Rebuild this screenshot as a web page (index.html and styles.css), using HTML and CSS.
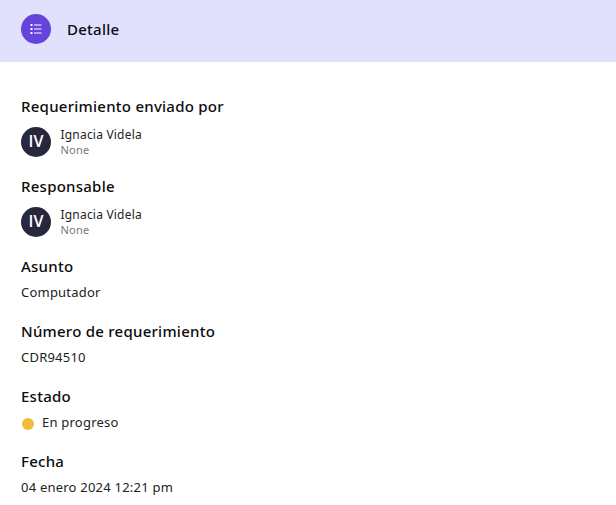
FILE: index.html
```html
<!DOCTYPE html>
<html lang="es">
<head>
<meta charset="utf-8">
<title>Detalle</title>
<link rel="stylesheet" href="styles.css">
</head>
<body>
<header class="header">
  <span class="header-icon">
    <svg width="12" height="12" viewBox="0 0 12 12" fill="none" stroke="#fff">
      <path stroke-width="1.2" d="M4 2h7.5M4 6h7.5M4 10h7.5"/>
      <path stroke-width="2" d="M.5 2h2M.5 6h2M.5 10h2"/>
    </svg>
  </span>
  <h1 class="header-title">Detalle</h1>
</header>
<main class="content">
  <section class="field">
    <h2 class="label">Requerimiento enviado por</h2>
    <div class="person">
      <span class="avatar">IV</span>
      <div class="person-text">
        <div class="person-name">Ignacia Videla</div>
        <div class="person-sub">None</div>
      </div>
    </div>
  </section>
  <section class="field">
    <h2 class="label">Responsable</h2>
    <div class="person">
      <span class="avatar">IV</span>
      <div class="person-text">
        <div class="person-name">Ignacia Videla</div>
        <div class="person-sub">None</div>
      </div>
    </div>
  </section>
  <section class="field">
    <h2 class="label">Asunto</h2>
    <p class="value">Computador</p>
  </section>
  <section class="field">
    <h2 class="label">Número de requerimiento</h2>
    <p class="value">CDR94510</p>
  </section>
  <section class="field">
    <h2 class="label">Estado</h2>
    <p class="value status"><span class="dot"></span>En progreso</p>
  </section>
  <section class="field">
    <h2 class="label">Fecha</h2>
    <p class="value">04 enero 2024 12:21 pm</p>
  </section>
</main>
</body>
</html>
```
FILE: styles.css
```css
* { box-sizing: border-box; }
html, body { margin: 0; padding: 0; }
body {
  background: #fff;
  color: #111;
  font-family: "Noto Sans", sans-serif;
  overflow: hidden;
}
.header {
  height: 62px;
  background: #e2e1fd;
  display: flex;
  align-items: center;
  padding: 0 21px 4px;
  gap: 16px;
}
.header-icon {
  width: 30px;
  height: 30px;
  border-radius: 50%;
  background: #6444dc;
  display: flex;
  align-items: center;
  justify-content: center;
}
.header-title {
  margin: 0;
  font-size: 15px;
  font-weight: 500;
  line-height: 20px;
  letter-spacing: .25px;
  color: #0c0c14;
}
.content {
  padding: 34px 21px 0;
  display: flex;
  flex-direction: column;
  gap: 19px;
}
.field { display: flex; flex-direction: column; }
.label {
  margin: 0;
  font-size: 15px;
  font-weight: 500;
  line-height: 20px;
  letter-spacing: .25px;
  color: #0c0c0c;
}
.value {
  margin: 7px 0 0;
  font-size: 13px;
  line-height: 19px;
  letter-spacing: .22px;
  color: #222;
}
.person { display: flex; align-items: center; gap: 9.5px; margin-top: 11px; }
.avatar {
  width: 30px;
  height: 30px;
  padding-bottom: 2px;
  border-radius: 50%;
  background: #27273f;
  color: #fff;
  font-family: "Open Sans", sans-serif;
  font-size: 16px;
  font-weight: 600;
  display: flex;
  align-items: center;
  justify-content: center;
}
.person-text { display: flex; flex-direction: column; }
.person-name { font-size: 12px; line-height: 16px; letter-spacing: .2px; color: #222; }
.person-sub { font-size: 11px; line-height: 14px; letter-spacing: .2px; color: #777; }
.status { display: flex; align-items: center; gap: 8px; }
.dot {
  width: 12px;
  height: 12px;
  margin: 3px 0 0 1px;
  border-radius: 50%;
  background: #f2bb3c;
}
```
